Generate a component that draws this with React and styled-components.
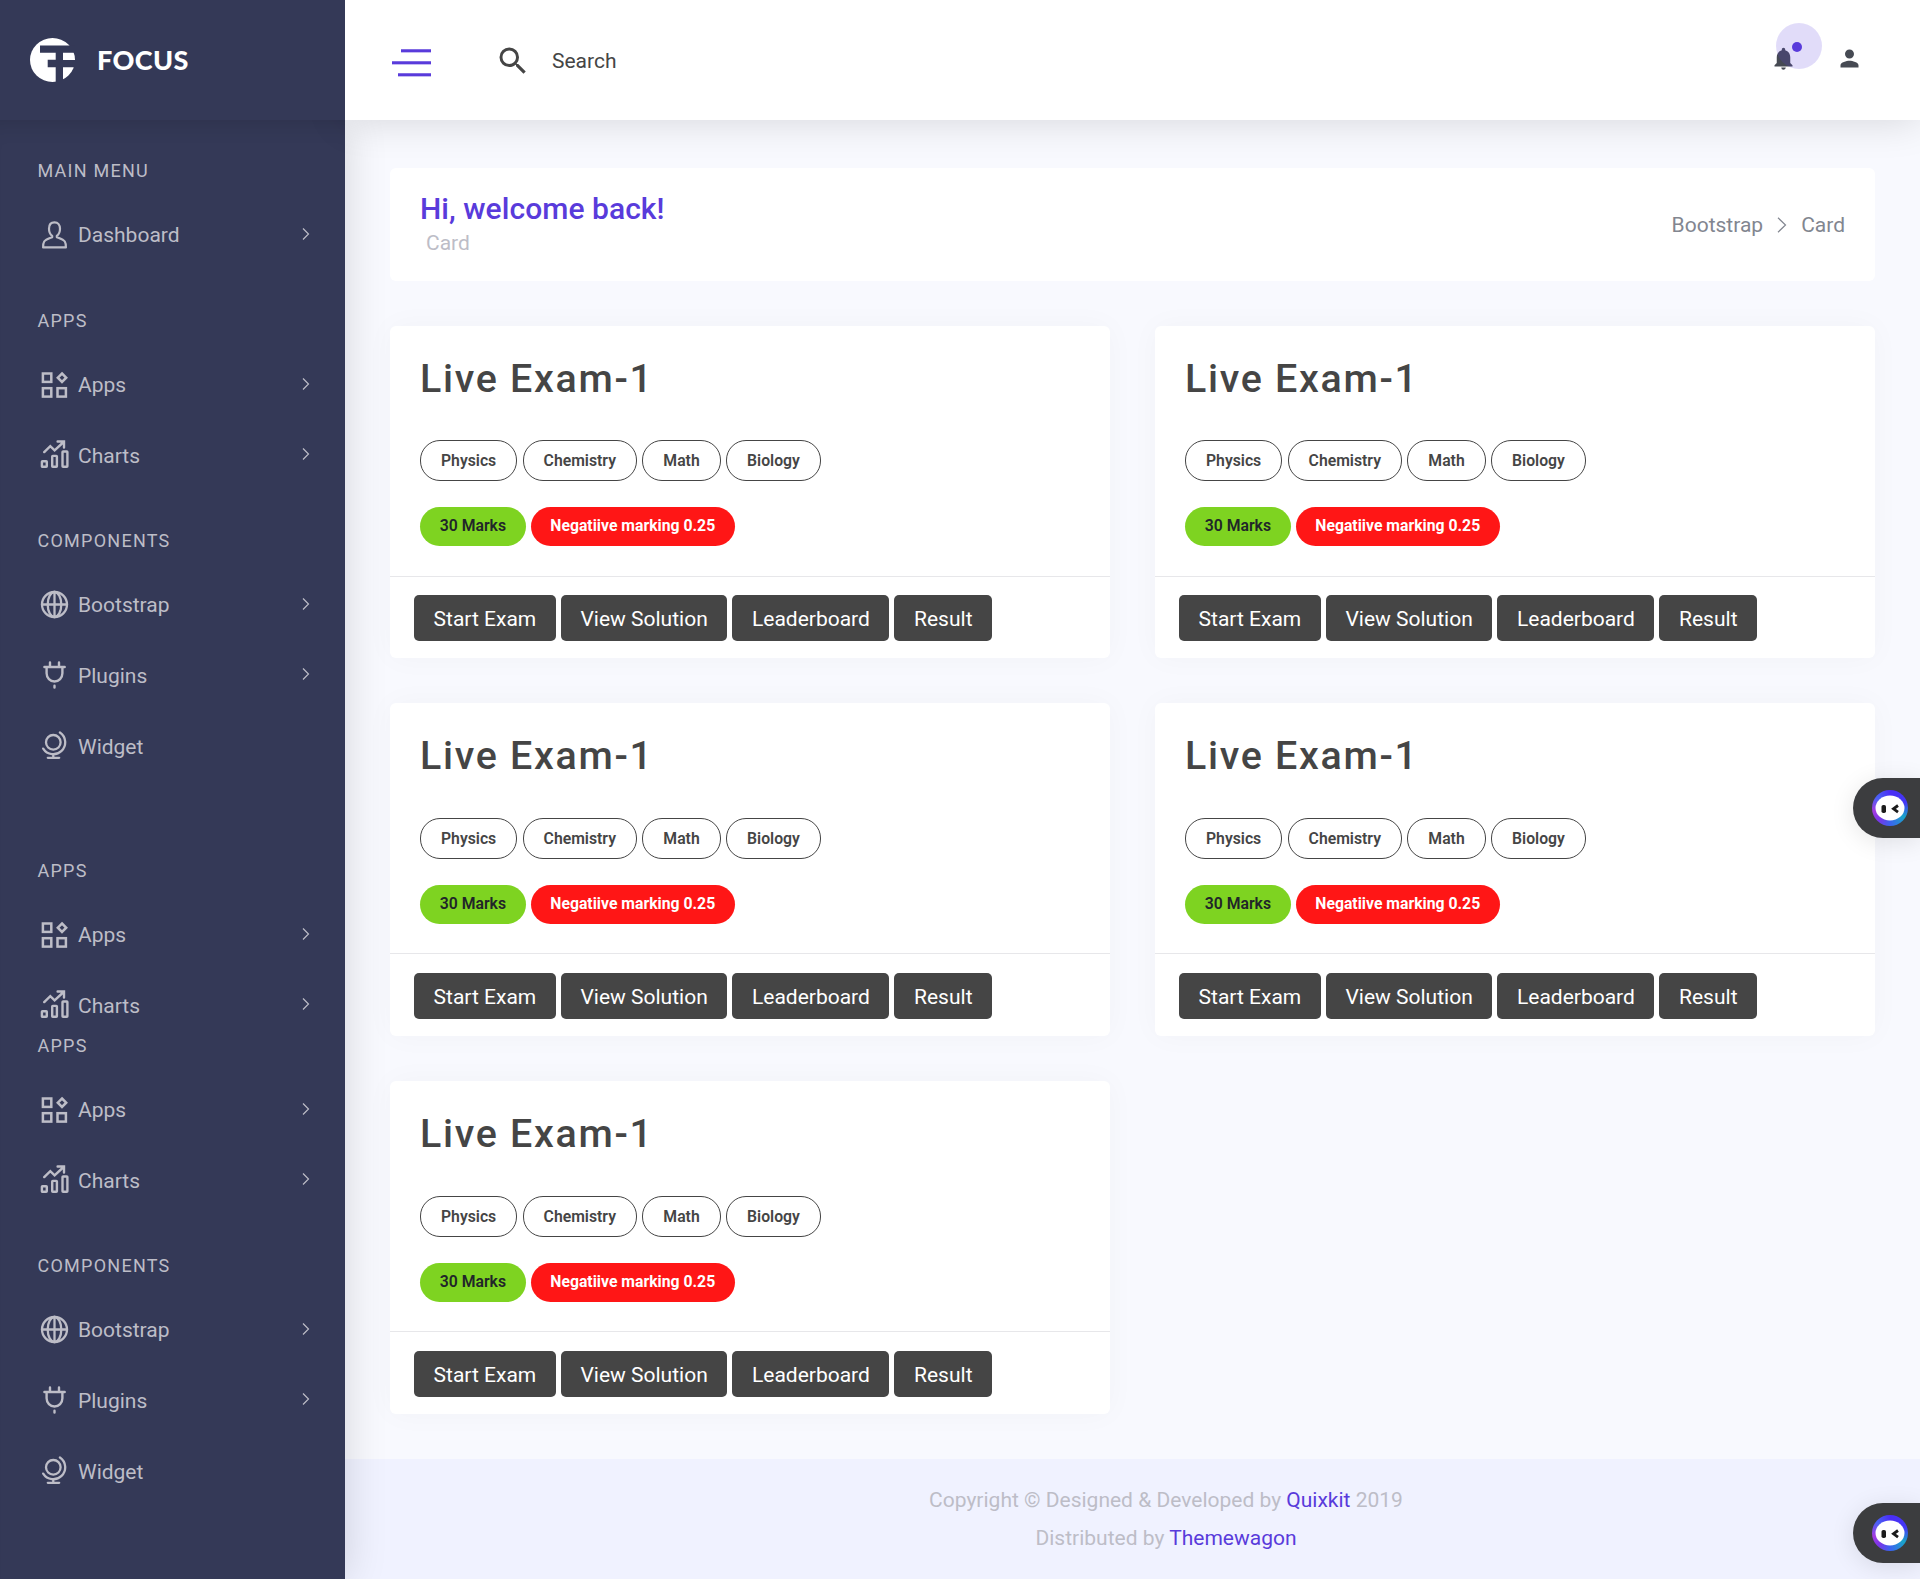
import React from "react";
import styled, { createGlobalStyle, css } from "styled-components";
import { MdSearch, MdNotifications, MdPerson } from "react-icons/md";

const Global = createGlobalStyle`
  *, *::before, *::after { box-sizing: border-box; }
  body {
    margin: 0;
    background: #f8f9fe;
    font-family: Roboto, "Open Sans", sans-serif;
    font-size: 21px;
    line-height: 30px;
    color: #454545;
    overflow: hidden;
  }
  a { text-decoration: none; color: inherit; }
`;

const Page = styled.div`
  display: grid;
  grid-template-columns: 345px 1fr;
  grid-template-rows: 120px 1459px;
  height: 1579px;
`;

const Brand = styled.div`
  background: #343957;
  display: flex;
  align-items: center;
  padding-left: 30px;
  gap: 22px;
  z-index: 3;
`;

const BrandName = styled.span`
  color: #fff;
  font-family: Lato, sans-serif;
  font-weight: 900;
  font-size: 27px;
  line-height: 30px;
  letter-spacing: 0.4px;
`;

const TopBar = styled.header`
  background: #fff;
  box-shadow: 0 0 40px rgba(0, 0, 0, 0.15);
  display: flex;
  align-items: center;
  padding: 0 57px 0 47px;
  z-index: 2;
`;

const Burger = styled.div`
  display: flex;
  flex-direction: column;
  align-items: flex-end;
  width: 39px;
  gap: 8px;
  padding-top: 6px;
`;

const BurgerLine = styled.span`
  height: 4px;
  width: ${(p) => p.$w}px;
  background: linear-gradient(
    rgba(89, 59, 219, 0.75) 1px,
    #593bdb 1px,
    #593bdb 3px,
    rgba(89, 59, 219, 0.35) 3px
  );
`;

const SearchBox = styled.label`
  display: flex;
  align-items: center;
  margin-left: 64px;
  padding-top: 2px;
  gap: 21px;
  flex: 1;
  color: #454545;
  svg { display: block; }
`;

const Tools = styled.div`
  display: flex;
  align-items: center;
  gap: 39px;
  padding-bottom: 3px;
  color: #464a53;
  svg { display: block; }
`;

const BellWrap = styled.span`
  position: relative;
`;

const Pulse = styled.span`
  position: absolute;
  left: 6px;
  top: -22px;
  width: 46px;
  height: 46px;
  border-radius: 50%;
  background: rgba(89, 59, 219, 0.18);
`;

const Dot = styled.span`
  position: absolute;
  left: 22px;
  top: -3.5px;
  width: 10px;
  height: 10px;
  border-radius: 50%;
  background: #593bdb;
`;

const Sidebar = styled.nav`
  background: #343957;
  color: #bdbdc7;
  padding-top: 24px;
  box-shadow: 0 0 40px rgba(0, 0, 0, 0.15), inset 0 22px 24px -22px rgba(0, 0, 0, 0.16);
  z-index: 1;
`;

const Group = styled.section`
  height: ${(p) => p.$h}px;
`;

const GroupTitle = styled.h4`
  margin: 0;
  padding: 12px 37.5px 0;
  height: 55.3px;
  font-size: 18px;
  line-height: 30px;
  font-weight: 400;
  letter-spacing: 1.25px;
`;

const MenuItem = styled.a`
  display: flex;
  align-items: center;
  height: 70.7px;
  padding: 0 35px 0 39px;
`;

const MenuIcon = styled.svg`
  width: 30px;
  height: 30px;
  flex: none;
  fill: none;
  stroke: currentColor;
  stroke-width: 2.2;
  stroke-linecap: round;
  margin-right: 9px;
`;

const MenuLabel = styled.span`
  flex: 1;
  padding-top: 1.500px;
`;

const Chevron = styled.svg`
  width: ${(p) => p.$w || 8}px;
  height: ${(p) => p.$h || 14}px;
  margin-bottom: ${(p) => p.$lift || 0}px;
  fill: none;
  stroke: currentColor;
  stroke-width: 1.2;
`;

const Main = styled.main`
  display: flex;
  flex-direction: column;
`;

const Content = styled.div`
  padding: 48px 45px 0;
  flex: 1;
`;

const TitleBar = styled.div`
  background: #fff;
  border-radius: 6px;
  height: 113px;
  padding: 0 30px;
  display: flex;
  justify-content: space-between;
  align-items: center;
  margin-bottom: 44.8px;
`;

const Welcome = styled.h4`
  margin: 0;
  color: #593bdb;
  font-size: 30px;
  line-height: 33px;
  font-weight: 500;
  letter-spacing: 0.05px;
`;

const SubTitle = styled.p`
  margin: 3px 0 0 6px;
  line-height: 30px;
  color: #bdbdc7;
`;

const Crumbs = styled.div`
  display: flex;
  align-items: center;
  color: #828690;
  gap: 14px;
`;

const CardGrid = styled.div`
  display: grid;
  grid-template-columns: 1fr 1fr;
  column-gap: 45px;
  row-gap: 45px;
`;

const Card = styled.article`
  background: #fff;
  border-radius: 6px;
  height: 332.6px;
  box-shadow: 0 0 30px rgba(0, 0, 0, 0.03);
  display: flex;
  flex-direction: column;
`;

const CardBody = styled.div`
  height: 249.9px;
  padding: 30px 30px 0;
`;

const CardTitle = styled.h2`
  margin: 0;
  font-size: 39.4px;
  line-height: 46px;
  font-weight: 500;
  letter-spacing: 1.7px;
`;

const TagRow = styled.div`
  display: flex;
  gap: ${(p) => p.$gap}px;
  margin-top: ${(p) => p.$top}px;
`;

const tones = {
  outline: css`
    border: 1px solid #454545;
    height: 41px;
    padding: 0 20px;
    line-height: 39px;
    font-weight: 600;
  `,
  green: css`
    background: #7ed321;
    color: #212529;
    font-weight: 600;
    padding: 0 19.8px;
  `,
  red: css`
    background: #ff1616;
    color: #fff;
    font-weight: 700;
  `,
};

const Tag = styled.span`
  height: 39px;
  border-radius: 20px;
  padding: 0 19.5px;
  font-size: 15.75px;
  line-height: 37px;
  white-space: nowrap;
  ${(p) => tones[p.$tone]}
`;

const CardFooter = styled.div`
  border-top: 1px solid #e7e7ea;
  padding: 18.7px 24px 0;
  display: flex;
  gap: 5px;
`;

const Button = styled.button`
  height: 46px;
  border: 0;
  border-radius: 5px;
  padding: 2px 19.6px 0;
  background: #454545;
  color: #fff;
  font: 400 21px/30px Roboto, sans-serif;
  white-space: nowrap;
`;

const Footer = styled.footer`
  height: 120px;
  background: #f0f2ff;
  color: #bdbdc7;
  text-align: center;
  padding: 22px 0 0 67px;
  line-height: 38px;
  a { color: #593bdb; }
  p { margin: 0; }
`;

const Assistant = styled.div`
  position: fixed;
  right: 0;
  top: ${(p) => p.$top}px;
  width: 67px;
  height: 60px;
  border-radius: 30px 0 0 30px;
  background: #3c3d3f;
  box-shadow: 0 4px 24px rgba(0, 0, 0, 0.1);
  display: flex;
  align-items: center;
  padding-left: 19px;
  z-index: 5;
`;

const Face = styled.div`
  width: 36px;
  height: 36px;
  border-radius: 50%;
  background: conic-gradient(#4a2df5, #4338f5 20%, #19a5c9 34%, #3b62f0 50%, #7a35e8 62%, #a43be0 72%, #4a62f5 86%, #4a2df5);
  display: grid;
  place-items: center;
`;

const icons = {
  user: (
    <path
      d="M15.500 2.400c-3.500 0-5.500 2.500-5.500 6.300 0 3.200 1.400 5.900 3.200 7.200v1.200c-3.600 1.400-6.500 2.200-8 4.400-.8 1.200-1.100 3-1.100 5.900h22.800c0-2.900-.3-4.700-1.100-5.900-1.500-2.200-4.400-3-8-4.400v-1.200c1.800-1.300 3.200-4 3.200-7.200 0-3.800-2-6.300-5.500-6.300z"
      strokeLinejoin="round"
    />
  ),
  apps: (
    <g strokeWidth="2.500">
      <rect x="3.900" y="3.500" width="8.400" height="8.400" />
      <rect x="3.900" y="18.200" width="8.400" height="8.400" />
      <rect x="18.500" y="18.200" width="8.400" height="8.400" />
      <path d="M23 3.500l4.200 4.200-4.200 4.200-4.200-4.200z" />
    </g>
  ),
  charts: (
    <g strokeWidth="2.400">
      <rect x="2.900" y="21.200" width="4.900" height="5.600" rx=".6" />
      <rect x="13.200" y="15.900" width="4.700" height="10.900" rx=".6" />
      <rect x="23.500" y="11.500" width="4.900" height="15.300" rx=".6" />
      <path d="M5.200 12.100l6.100-6 4.300 4.200 9-8.300M18.600 1.500h6.400v6" />
    </g>
  ),
  globe: (
    <g strokeWidth="2.300">
      <circle cx="15.500" cy="14.500" r="12.500" />
      <ellipse cx="15.500" cy="14.500" rx="6.800" ry="12.500" />
      <path d="M15.500 2v25M3 14.500h25" />
    </g>
  ),
  plug: (
    <path d="M5.400 7h20.300M11 6.500V2.500M20 6.500V2.500M7.600 7.500v5.800a7.900 8.200 0 0 0 15.800 0V7.500M15.500 25.800v1.800" strokeWidth="2.400" />
  ),
  widget: (
    <g strokeWidth="2.300">
      <circle cx="14.300" cy="11.300" r="7.300" />
      <path d="M20.950 1.430A11.900 11.900 0 1 1 4.200 17.600M14.300 23.200v3.500M8.800 26.800h11.400" />
    </g>
  ),
};

const components = [
  ["globe", "Bootstrap", true],
  ["plug", "Plugins", true],
  ["widget", "Widget", false],
];
const apps = [
  ["apps", "Apps", true],
  ["charts", "Charts", true],
];

const menu = [
  { title: "MAIN MENU", h: 150, items: [["user", "Dashboard", true]] },
  { title: "APPS", h: 220, items: apps },
  { title: "COMPONENTS", h: 330, items: components },
  { title: "APPS", h: 175, items: apps },
  { title: "APPS", h: 220, items: apps },
  { title: "COMPONENTS", h: 330, items: components },
];

function ExamCard() {
  return (
    <Card>
      <CardBody>
        <CardTitle>Live Exam-1</CardTitle>
        <TagRow $gap={5.4} $top={38.6}>
          {["Physics", "Chemistry", "Math", "Biology"].map((t) => (
            <Tag key={t} $tone="outline">{t}</Tag>
          ))}
        </TagRow>
        <TagRow $gap={5} $top={26}>
          <Tag $tone="green">30 Marks</Tag>
          <Tag $tone="red">Negatiive marking 0.25</Tag>
        </TagRow>
      </CardBody>
      <CardFooter>
        {["Start Exam", "View Solution", "Leaderboard", "Result"].map((t) => (
          <Button key={t}>{t}</Button>
        ))}
      </CardFooter>
    </Card>
  );
}

function AssistantTab({ top }) {
  return (
    <Assistant $top={top}>
      <Face>
        <svg width="30" height="26" viewBox="0 0 30 26">
          <ellipse cx="15" cy="13" rx="14.500" ry="12.500" fill="#fff" />
          <rect x="6.500" y="10" width="4.500" height="8" rx="1.800" fill="#1b1b1b" />
          <path d="M23 10.500l-4.500 3.300 4.500 3.300" fill="none" stroke="#1b1b1b" strokeWidth="2.800" />
        </svg>
      </Face>
    </Assistant>
  );
}

export default function App() {
  return (
    <>
      <Global />
      <Page>
        <Brand>
          <svg width="45" height="44" viewBox="0 0 45 44">
            <ellipse cx="22.500" cy="22" rx="22.500" ry="22" fill="#fff" />
            <path d="M10 7.500h35v7.200H33v7.300h12v7.200H33V44h-7.300V29.200h-8v-7.500h8v-7H10z" fill="#343957" />
          </svg>
          <BrandName>FOCUS</BrandName>
        </Brand>
        <TopBar>
          <Burger>
            <BurgerLine $w={30} />
            <BurgerLine $w={39} />
            <BurgerLine $w={33} />
          </Burger>
          <SearchBox>
            <MdSearch size={36} />
            <span>Search</span>
          </SearchBox>
          <Tools>
            <BellWrap>
              <MdNotifications size={27} />
              <Pulse />
              <Dot />
            </BellWrap>
            <MdPerson size={27} />
          </Tools>
        </TopBar>
        <Sidebar>
          {menu.map((group, i) => (
            <Group key={i} $h={group.h}>
              <GroupTitle>{group.title}</GroupTitle>
              {group.items.map(([icon, label, more]) => (
                <MenuItem key={label} href="#">
                  <MenuIcon viewBox="0 0 30 30">{icons[icon]}</MenuIcon>
                  <MenuLabel>{label}</MenuLabel>
                  {more && (
                    <Chevron $lift={2} viewBox="0 0 8 14">
                      <path d="M1 1.500L6.500 7 1 12.500" />
                    </Chevron>
                  )}
                </MenuItem>
              ))}
            </Group>
          ))}
        </Sidebar>
        <Main>
          <Content>
            <TitleBar>
              <div>
                <Welcome>Hi, welcome back!</Welcome>
                <SubTitle>Card</SubTitle>
              </div>
              <Crumbs>
                <a href="#">Bootstrap</a>
                <Chevron $w={10} $h={16} viewBox="0 0 10 16">
                  <path d="M1 .8L8.500 8 1 15.200" />
                </Chevron>
                <a href="#">Card</a>
              </Crumbs>
            </TitleBar>
            <CardGrid>
              {[1, 2, 3, 4, 5].map((n) => (
                <ExamCard key={n} />
              ))}
            </CardGrid>
          </Content>
          <Footer>
            <p>Copyright © Designed &amp; Developed by <a href="#">Quixkit</a> 2019</p>
            <p>Distributed by <a href="#">Themewagon</a></p>
          </Footer>
        </Main>
      </Page>
      <AssistantTab top={778} />
      <AssistantTab top={1503} />
    </>
  );
}
